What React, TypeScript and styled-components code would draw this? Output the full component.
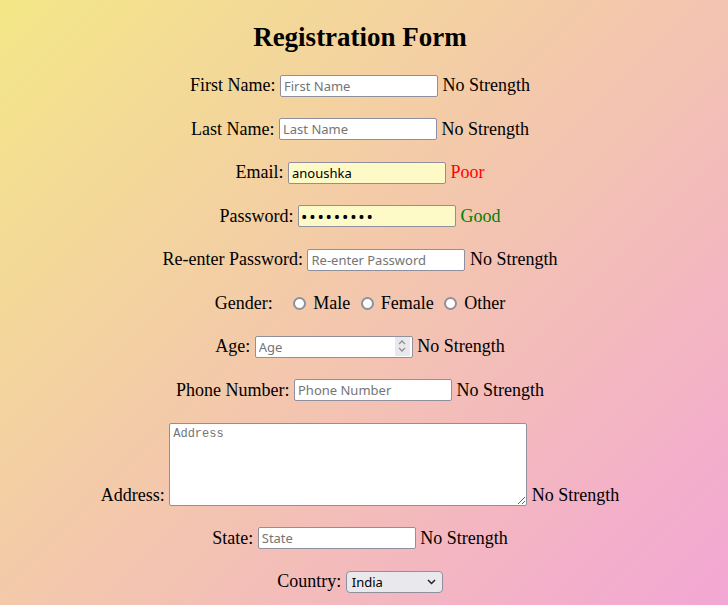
import styled, { createGlobalStyle } from 'styled-components';

type Level = 'none' | 'poor' | 'good';

interface Field {
  label: string;
  placeholder: string;
  type: string;
  value?: string;
  strength: Level;
}

const topFields: Field[] = [
  { label: 'First Name:', placeholder: 'First Name', type: 'text', strength: 'none' },
  { label: 'Last Name:', placeholder: 'Last Name', type: 'text', strength: 'none' },
  { label: 'Email:', placeholder: 'Email', type: 'text', value: 'anoushka', strength: 'poor' },
  { label: 'Password:', placeholder: 'Password', type: 'password', value: 'abcdefghi', strength: 'good' },
  { label: 'Re-enter Password:', placeholder: 'Re-enter Password', type: 'password', strength: 'none' },
];

const strengthText: Record<Level, string> = {
  none: 'No Strength',
  poor: 'Poor',
  good: 'Good',
};

const GlobalStyle = createGlobalStyle`
  html, body {
    margin: 0;
    padding: 0;
  }
  body {
    font-family: "Liberation Serif", "Times New Roman", serif;
    font-size: 18px;
    color: #000;
  }
`;

const Page = styled.div`
  min-height: 100vh;
  box-sizing: border-box;
  padding: 21.5px 8px 40px 0;
  background: linear-gradient(135deg, #f3e787 0%, #f3a5d6 100%);
`;

const Title = styled.h2`
  margin: 0 0 22px;
  font-size: 27px;
  line-height: 31px;
  font-weight: bold;
  text-align: center;
`;

const Form = styled.form`
  display: flex;
  flex-direction: column;
  gap: 21.5px;
`;

const Row = styled.div<{ $align?: 'center' | 'flex-end' }>`
  display: flex;
  justify-content: center;
  align-items: ${(p) => p.$align || 'center'};
  gap: 4.5px;
  min-height: 22px;
`;

const Label = styled.label`
  white-space: nowrap;
`;

const controlBase = `
  box-sizing: border-box;
  border: 1px solid #8f8f9d;
  border-radius: 2px;
  color: #000;
  outline: none;
  margin: 0;
`;

const TextInput = styled.input<{ $filled?: boolean }>`
  ${controlBase}
  width: 158px;
  height: 22px;
  padding: 1px 3px;
  background: ${(p) => (p.$filled ? '#fefac8' : '#fff')};
  font-family: "Noto Sans", "Open Sans", sans-serif;
  font-size: 13px;

  &::placeholder {
    color: #757575;
  }

  &[type='password']:not(:placeholder-shown) {
    font-size: 17px;
    letter-spacing: 1.8px;
    padding-left: 2px;
  }

  &::-webkit-inner-spin-button,
  &::-webkit-outer-spin-button {
    -webkit-appearance: none;
    margin: 0;
  }
`;

const SpinWrap = styled.span`
  position: relative;
  display: inline-flex;
`;

const Spinner = styled.span`
  position: absolute;
  right: 3px;
  top: 1px;
  width: 15px;
  height: 19px;
  background: #e9e9ed;
  display: flex;
  flex-direction: column;
  align-items: center;
  justify-content: center;
  gap: 2px;
`;

const Strength = styled.span<{ $level: Level }>`
  white-space: nowrap;
  color: ${(p) => (p.$level === 'poor' ? '#ff0000' : p.$level === 'good' ? '#008000' : '#000')};
`;

const Options = styled.div`
  display: flex;
  align-items: center;
  gap: 10.5px;
  margin-left: 16px;
`;

const Option = styled.label`
  display: flex;
  align-items: center;
  gap: 7px;
`;

const Radio = styled.input`
  appearance: none;
  box-sizing: border-box;
  width: 13px;
  height: 13px;
  margin: 0;
  border: 2px solid #8f8f9d;
  border-radius: 50%;
  background: #fff;
`;

const TextArea = styled.textarea`
  ${controlBase}
  width: 358px;
  height: 83px;
  padding: 3px 3px;
  background: #fff;
  font-family: "Liberation Mono", "DejaVu Sans Mono", monospace;
  font-size: 12px;
  resize: both;

  &::placeholder {
    color: #757575;
  }
`;

const SelectWrap = styled.span`
  position: relative;
  display: inline-flex;
`;

const Select = styled.select`
  ${controlBase}
  appearance: none;
  width: 97px;
  height: 22px;
  padding: 0 20px 0 5px;
  border-radius: 4px;
  background: #e9e9ed;
  font-family: "Noto Sans", "Open Sans", sans-serif;
  font-size: 13px;
`;

const Chevron = styled.svg`
  position: absolute;
  right: 7px;
  top: 8px;
  pointer-events: none;
`;

const StepArrow = ({ up }: { up?: boolean }) => (
  <svg width="8" height="5" viewBox="0 0 8 5">
    <path
      d={up ? 'M1 4.2 L4 1 L7 4.2' : 'M1 0.8 L4 4 L7 0.8'}
      fill="none"
      stroke="#8a8a8a"
      strokeWidth="1.2"
    />
  </svg>
);

const App = () => {
  return (
    <Page>
      <GlobalStyle />
      <Title>Registration Form</Title>
      <Form onSubmit={(e) => e.preventDefault()}>
        {topFields.map((f) => (
          <Row key={f.label}>
            <Label>{f.label}</Label>
            <TextInput
              type={f.type}
              placeholder={f.placeholder}
              defaultValue={f.value}
              $filled={!!f.value}
            />
            <Strength $level={f.strength}>{strengthText[f.strength]}</Strength>
          </Row>
        ))}

        <Row>
          <Label>Gender:</Label>
          <Options>
            {['Male', 'Female', 'Other'].map((g) => (
              <Option key={g}>
                <Radio type="radio" name="gender" value={g.toLowerCase()} />
                {g}
              </Option>
            ))}
          </Options>
        </Row>

        <Row>
          <Label>Age:</Label>
          <SpinWrap>
            <TextInput type="number" placeholder="Age" />
            <Spinner>
              <StepArrow up />
              <StepArrow />
            </Spinner>
          </SpinWrap>
          <Strength $level="none">No Strength</Strength>
        </Row>

        <Row>
          <Label>Phone Number:</Label>
          <TextInput type="text" placeholder="Phone Number" />
          <Strength $level="none">No Strength</Strength>
        </Row>

        <Row $align="flex-end">
          <Label>Address:</Label>
          <TextArea placeholder="Address" />
          <Strength $level="none">No Strength</Strength>
        </Row>

        <Row>
          <Label>State:</Label>
          <TextInput type="text" placeholder="State" />
          <Strength $level="none">No Strength</Strength>
        </Row>

        <Row>
          <Label>Country:</Label>
          <SelectWrap>
            <Select defaultValue="India">
              <option>India</option>
              <option>USA</option>
              <option>UK</option>
            </Select>
            <Chevron width="9" height="6" viewBox="0 0 9 6">
              <path d="M1 1 L4.5 4.5 L8 1" fill="none" stroke="#222" strokeWidth="1.5" />
            </Chevron>
          </SelectWrap>
        </Row>
      </Form>
    </Page>
  );
};

export default App;
